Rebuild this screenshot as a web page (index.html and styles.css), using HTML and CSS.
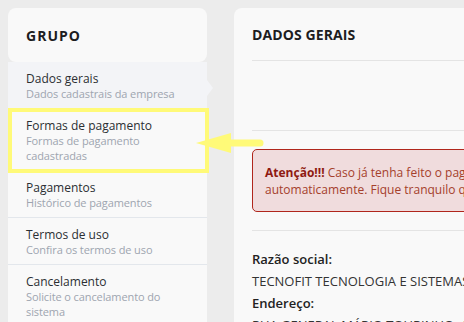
FILE: index.html
```html
<!DOCTYPE html>
<html lang="pt-br">
<head>
    <meta charset="UTF-8">
    <title>Dados gerais</title>
    <link rel="stylesheet" href="styles.css">
</head>
<body>
    <div id="pagina">
        <div id="lateral">
            <div id="lateral-titulo">GRUPO</div>
            <ul id="menu">
                <li class="item ativo">
                    <span class="item-nome">Dados gerais</span>
                    <span class="item-desc">Dados cadastrais da empresa</span>
                </li>
                <li class="item">
                    <span class="item-nome">Formas de pagamento</span>
                    <span class="item-desc">Formas de pagamento cadastradas</span>
                </li>
                <li class="item">
                    <span class="item-nome">Pagamentos</span>
                    <span class="item-desc">Histórico de pagamentos</span>
                </li>
                <li class="item">
                    <span class="item-nome">Termos de uso</span>
                    <span class="item-desc">Confira os termos de uso</span>
                </li>
                <li class="item">
                    <span class="item-nome">Cancelamento</span>
                    <span class="item-desc">Solicite o cancelamento do sistema</span>
                </li>
            </ul>
        </div>
        <div id="conteudo">
            <h2 id="conteudo-titulo">DADOS GERAIS</h2>
            <div class="espaco"></div>
            <div id="alerta">
                <b>Atenção!!!</b> Caso já tenha feito o pagamento, seu acesso será liberado automaticamente. Fique tranquilo que em breve tudo estará normalizado.
            </div>
            <div id="dados">
                <div class="rotulo">Razão social:</div>
                <div class="valor">TECNOFIT TECNOLOGIA E SISTEMAS LTDA</div>
                <div class="rotulo">Endereço:</div>
                <div class="valor">RUA GENERAL MÁRIO TOURINHO, 1733</div>
            </div>
        </div>
    </div>

    <!-- marcação em amarelo -->
    <div id="destaque"></div>
    <svg id="seta" width="72" height="24" viewBox="0 0 72 24">
        <polygon points="2,12 37,2 37,22" fill="#fffa78"/>
        <line x1="34" y1="12" x2="66" y2="12" stroke="#fffa78" stroke-width="7" stroke-linecap="round"/>
    </svg>
</body>
</html>
```

FILE: styles.css
```css
* {
  box-sizing: border-box;
}

html, body {
  margin: 0;
  padding: 0;
  overflow: hidden;
}

body {
  background-color: #ececec;
  font-family: "Open Sans", "Noto Sans", Arial, sans-serif;
  color: #333;
  font-size: 13px;
}

#pagina {
  display: flex;
  align-items: flex-start;
  gap: 27px;
  padding: 8px;
  width: 900px;
}

#lateral {
  width: 199px;
  flex-shrink: 0;
}

#lateral-titulo {
  background-color: #f9f9f9;
  border-radius: 8px;
  height: 54px;
  padding: 0 18px;
  display: flex;
  align-items: center;
  font-weight: 700;
  font-size: 14px;
  letter-spacing: 1px;
  color: #1d1d1f;
}

#menu {
  list-style: none;
  margin: 0;
  padding: 0;
}

.item {
  position: relative;
  display: flex;
  flex-direction: column;
  background-color: #f9f9f9;
  padding: 9px 18px 7px;
  border-top: 1px solid #e3e7ec;
  line-height: 15px;
}

.item.ativo {
  background-color: #f3f4f7;
  border-top: none;
}

.item.ativo::after {
  content: "";
  position: absolute;
  right: -6px;
  top: 18px;
  border-left: 6px solid #f3f4f7;
  border-top: 8px solid transparent;
  border-bottom: 8px solid transparent;
}

.item-nome {
  font-size: 12px;
  color: #2b2f33;
}

.item-desc {
  font-size: 11px;
  letter-spacing: -0.1px;
  color: #9ea5b0;
}

#conteudo {
  width: 480px;
  flex-shrink: 0;
  background-color: #f9f9f9;
  border-radius: 8px;
  padding: 0 18px;
  height: 400px;
}

#conteudo-titulo {
  margin: 0;
  height: 53px;
  display: flex;
  align-items: center;
  font-size: 14px;
  font-weight: 700;
  letter-spacing: 0.1px;
  color: #1d1d1f;
  border-bottom: 1px solid #e4e4e4;
}

.espaco {
  height: 70px;
  border-bottom: 1px solid #e4e4e4;
}

#alerta {
  margin-top: 18px;
  background-color: #f0dcdd;
  border: 1px solid #b0261c;
  border-radius: 5px;
  padding: 14px 12px 13px;
  color: #a5402c;
  line-height: 17px;
  font-size: 12px;
}

#alerta b {
  color: #8f1a12;
}

#dados {
  margin-top: 18px;
  border-top: 1px solid #e4e4e4;
  padding-top: 17px;
  line-height: 22px;
  font-size: 13px;
}

.rotulo {
  font-weight: 600;
  color: #222;
}

.valor {
  color: #333;
}

#destaque {
  position: absolute;
  left: 8px;
  top: 108px;
  width: 201px;
  height: 65px;
  border: 4px solid #fffa78;
}

#seta {
  position: absolute;
  left: 194px;
  top: 131px;
}
```
